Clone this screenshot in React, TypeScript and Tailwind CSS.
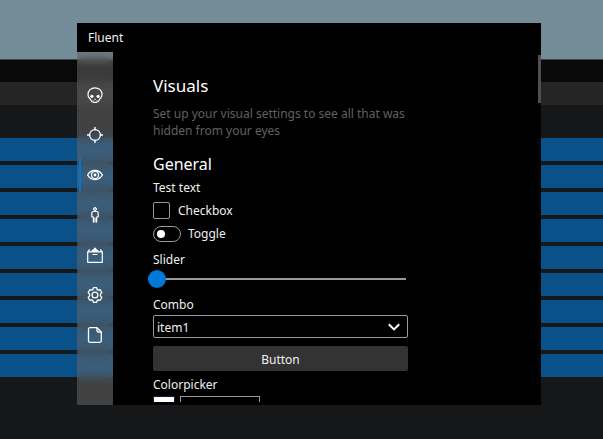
import { useState } from "react";
import type { ReactNode } from "react";

const SESSION_ROWS = 9;

function Glyph({ children }: { children: ReactNode }) {
  return (
    <svg
      viewBox="0 0 16 16"
      className="size-4"
      fill="none"
      stroke="currentColor"
      strokeWidth="1"
      strokeLinejoin="round"
      aria-hidden="true"
    >
      {children}
    </svg>
  );
}

const tabs: { name: string; icon: ReactNode }[] = [
  {
    name: "Rage",
    icon: (
      <Glyph>
        <path d="M8 .8C4 .8 1 3.600 1 7.500c0 1.600.5 2.900 1.500 3.800.7.600 1 1 1.300 1.800.5 1.500 1.500 2.300 3 2.300h2.400c1.500 0 2.500-.8 3-2.300.3-.8.6-1.200 1.300-1.800 1-.9 1.500-2.200 1.500-3.800C15 3.600 12 .8 8 .8Z" strokeWidth="1.200" />
        <circle cx="4.900" cy="9.300" r="1.600" fill="currentColor" stroke="none" />
        <circle cx="11.100" cy="9.300" r="1.600" fill="currentColor" stroke="none" />
        <path d="m8 11.200-1 1.600h2l-1-1.600Z" fill="currentColor" stroke="none" />
        <path d="M6 13.200v1.300M10 13.200v1.300" />
      </Glyph>
    ),
  },
  {
    name: "Aim",
    icon: (
      <Glyph>
        <circle cx="8" cy="8" r="5.400" strokeWidth="1.200" />
        <path d="M8 0v3.200M8 12.800V16M0 8h3.200M12.800 8H16" strokeWidth="1.400" />
      </Glyph>
    ),
  },
  {
    name: "Visuals",
    icon: (
      <Glyph>
        <path d="M.6 8C2.200 5 4.800 3.500 8 3.500S13.800 5 15.400 8c-1.600 3-4.200 4.500-7.400 4.500S2.200 11 .6 8Z" strokeWidth="1.300" />
        <circle cx="8" cy="8" r="3.500" strokeWidth="1.200" />
        <circle cx="8" cy="8" r="1.400" fill="currentColor" stroke="none" />
      </Glyph>
    ),
  },
  {
    name: "Player",
    icon: (
      <Glyph>
        <circle cx="8" cy="2" r="1.500" fill="currentColor" fillOpacity=".5" />
        <path d="M6.300 4.500h3.400c.9 0 1.500.6 1.500 1.500v3.600l-1.600.8v5.100M6.400 15.500v-5.100l-1.600-.8V6c0-.9.600-1.500 1.500-1.500M8 10.500v5" strokeWidth="1.200" />
      </Glyph>
    ),
  },
  {
    name: "Inventory",
    icon: (
      <Glyph>
        <path d="M.7 4.600v10.700h14.600V4.600M.7 4.800h14.600M.8 4.800l1.900-2.400M15.200 4.800l-1.900-2.400" strokeWidth="1.200" />
        <path d="M4 4.800c.3-1.200 1-1.900 2.100-2.300L8 .3l1.900 2.200C11 2.900 11.700 3.600 12 4.800H4Z" fill="currentColor" stroke="none" />
        <path d="M5.500 7.500h5" />
      </Glyph>
    ),
  },
  {
    name: "Settings",
    icon: (
      <Glyph>
        <path d="m6.400.7-.5 1.500c-.2.6-.8 1-1.500.8L2.800 2.700 1.200 5.500l1.100 1.300c.5.7.5 1.700 0 2.400l-1.100 1.300 1.600 2.800 1.600-.3c.7-.1 1.300.2 1.500.8l.5 1.500h3.200l.5-1.500c.2-.6.8-.9 1.500-.8l1.600.3 1.600-2.800-1.100-1.300c-.5-.7-.5-1.700 0-2.400l1.100-1.300-1.600-2.800-1.600.3c-.7.2-1.300-.2-1.500-.8L9.600.7H6.400Z" strokeWidth="1.300" />
        <circle cx="8" cy="8" r="2.900" strokeWidth="1.300" />
      </Glyph>
    ),
  },
  {
    name: "Configs",
    icon: (
      <Glyph>
        <path d="M3 .7h7l4.300 4.300v8.800c0 .9-.6 1.500-1.500 1.500H3c-.9 0-1.500-.6-1.500-1.500V2.200C1.500 1.300 2.100.7 3 .7Z" strokeWidth="1.300" />
        <path d="M10 .9v2.800c0 .8.5 1.300 1.300 1.300h2.800" strokeWidth="1.300" />
      </Glyph>
    ),
  },
];

function Backdrop() {
  return (
    <div className="col-start-1 row-start-1 flex flex-col bg-[#161719]" aria-hidden="true">
      <div className="h-[59px] bg-[#748c98]" />
      <div className="h-px bg-[#3c464c]" />
      <div className="h-[22px] bg-[#090909]" />
      <div className="h-[23px] bg-[#252525]" />
      <div className="mt-[33px] flex flex-col gap-1">
        {Array.from({ length: SESSION_ROWS }, (_, i) => (
          <div key={i} className="h-[23px] bg-[#0a5089]" />
        ))}
      </div>
    </div>
  );
}

function Sidebar({ active, onSelect }: { active: string; onSelect: (name: string) => void }) {
  return (
    <nav className="flex w-9 shrink-0 flex-col bg-[#6c6c6c]/50 pt-[23px] backdrop-blur-[5px]">
      {tabs.map((tab) => (
        <button
          key={tab.name}
          type="button"
          aria-label={tab.name}
          aria-current={tab.name === active ? "page" : undefined}
          onClick={() => onSelect(tab.name)}
          className="grid h-10 w-full grid-cols-[4px_1fr_4px] items-center text-white"
        >
          <span
            className={
              tab.name === active
                ? "h-[34px] w-0.5 justify-self-end bg-[#0078d7]"
                : "h-[34px] w-0.5 justify-self-end"
            }
          />
          <span className="flex justify-center">{tab.icon}</span>
        </button>
      ))}
    </nav>
  );
}

export default function App() {
  const [tab, setTab] = useState("Visuals");
  const [checked, setChecked] = useState(false);
  const [toggled, setToggled] = useState(false);
  const [amount, setAmount] = useState(0);
  const [color, setColor] = useState("");

  return (
    <div className="grid h-screen grid-cols-1 grid-rows-1 overflow-hidden bg-[#161719] font-['Noto_Sans',sans-serif] text-[12px] leading-[18px] text-[#f0f0f0]">
      <Backdrop />
      <div className="z-10 col-start-1 row-start-1 flex min-h-0 flex-col pt-[23px] pr-[62px] pb-[34px] pl-[77px]">
        <header className="flex h-[29px] shrink-0 items-center bg-black px-[11px]">Fluent</header>
        <div className="flex min-h-0 flex-1">
          <Sidebar active={tab} onSelect={setTab} />
          <div className="flex min-w-0 flex-1 bg-black py-[3px]">
            <main className="min-w-0 flex-1 overflow-hidden pt-[19px] pl-10">
              <div className="flex w-[255px] flex-col">
                <h1 className="text-[17px] leading-6 text-white">Visuals</h1>
                <p className="mt-[7px] leading-[17px] text-[#616161]">
                  Set up your visual settings to see all that was hidden from your eyes
                </p>
                <h2 className="mt-[14px] text-[16px] leading-[22px] text-white">General</h2>
                <p className="mt-1">Test text</p>

                <label className="mt-[5px] flex h-[17px] items-center gap-2">
                  <input
                    type="checkbox"
                    checked={checked}
                    onChange={(e) => setChecked(e.target.checked)}
                    className="size-[17px] appearance-none rounded-xs border border-[#999] bg-black checked:bg-[#0078d7]"
                  />
                  Checkbox
                </label>

                <label className="mt-[7px] flex h-4 items-center gap-[7px]">
                  <input
                    type="checkbox"
                    role="switch"
                    checked={toggled}
                    onChange={(e) => setToggled(e.target.checked)}
                    className="flex h-4 w-7 appearance-none items-center rounded-full border border-[#999] px-[3px] before:size-2 before:rounded-full before:bg-white checked:justify-end checked:bg-[#0078d7]"
                  />
                  Toggle
                </label>

                <label htmlFor="slider" className="mt-[9px]">
                  Slider
                </label>
                <input
                  id="slider"
                  type="range"
                  min={0}
                  max={100}
                  value={amount}
                  onChange={(e) => setAmount(Number(e.target.value))}
                  className="mt-px -ml-[5px] h-[18px] w-[258px] appearance-none bg-[linear-gradient(#999,#999)] bg-[length:100%_2px] bg-center bg-no-repeat [&::-webkit-slider-thumb]:size-[18px] [&::-webkit-slider-thumb]:appearance-none [&::-webkit-slider-thumb]:rounded-full [&::-webkit-slider-thumb]:bg-[#0078d7]"
                />

                <label htmlFor="combo" className="mt-2">
                  Combo
                </label>
                <div className="mt-px grid grid-cols-1 items-center">
                  <select
                    id="combo"
                    className="col-start-1 row-start-1 h-[23px] appearance-none rounded-xs border border-[#999] bg-black px-[3px] pt-0.5"
                  >
                    <option>item1</option>
                    <option>item2</option>
                    <option>item3</option>
                  </select>
                  <svg
                    viewBox="0 0 12 8"
                    className="pointer-events-none col-start-1 row-start-1 mr-2 h-2 w-3 justify-self-end"
                    fill="none"
                    stroke="white"
                    strokeWidth="2"
                    aria-hidden="true"
                  >
                    <path d="m.8 1.200 5.200 5.200 5.200-5.200" />
                  </svg>
                </div>

                <button type="button" className="mt-2 h-[25px] rounded-xs bg-[#333] pt-0.5">
                  Button
                </button>

                <label htmlFor="color" className="mt-[5px]">
                  Colorpicker
                </label>
                <div className="mt-0.5 flex gap-[5px]">
                  <button
                    type="button"
                    aria-label="Pick color"
                    className="h-[22px] w-[22px] border border-[#0e2038] bg-white"
                  />
                  <input
                    id="color"
                    type="text"
                    value={color}
                    onChange={(e) => setColor(e.target.value)}
                    className="h-[22px] w-20 border border-[#999] bg-black px-1"
                  />
                </div>
              </div>
            </main>
            <div className="w-1 bg-[#030303] pl-px">
              <div className="h-12 bg-[#4f4f4f]" />
            </div>
          </div>
        </div>
      </div>
    </div>
  );
}
